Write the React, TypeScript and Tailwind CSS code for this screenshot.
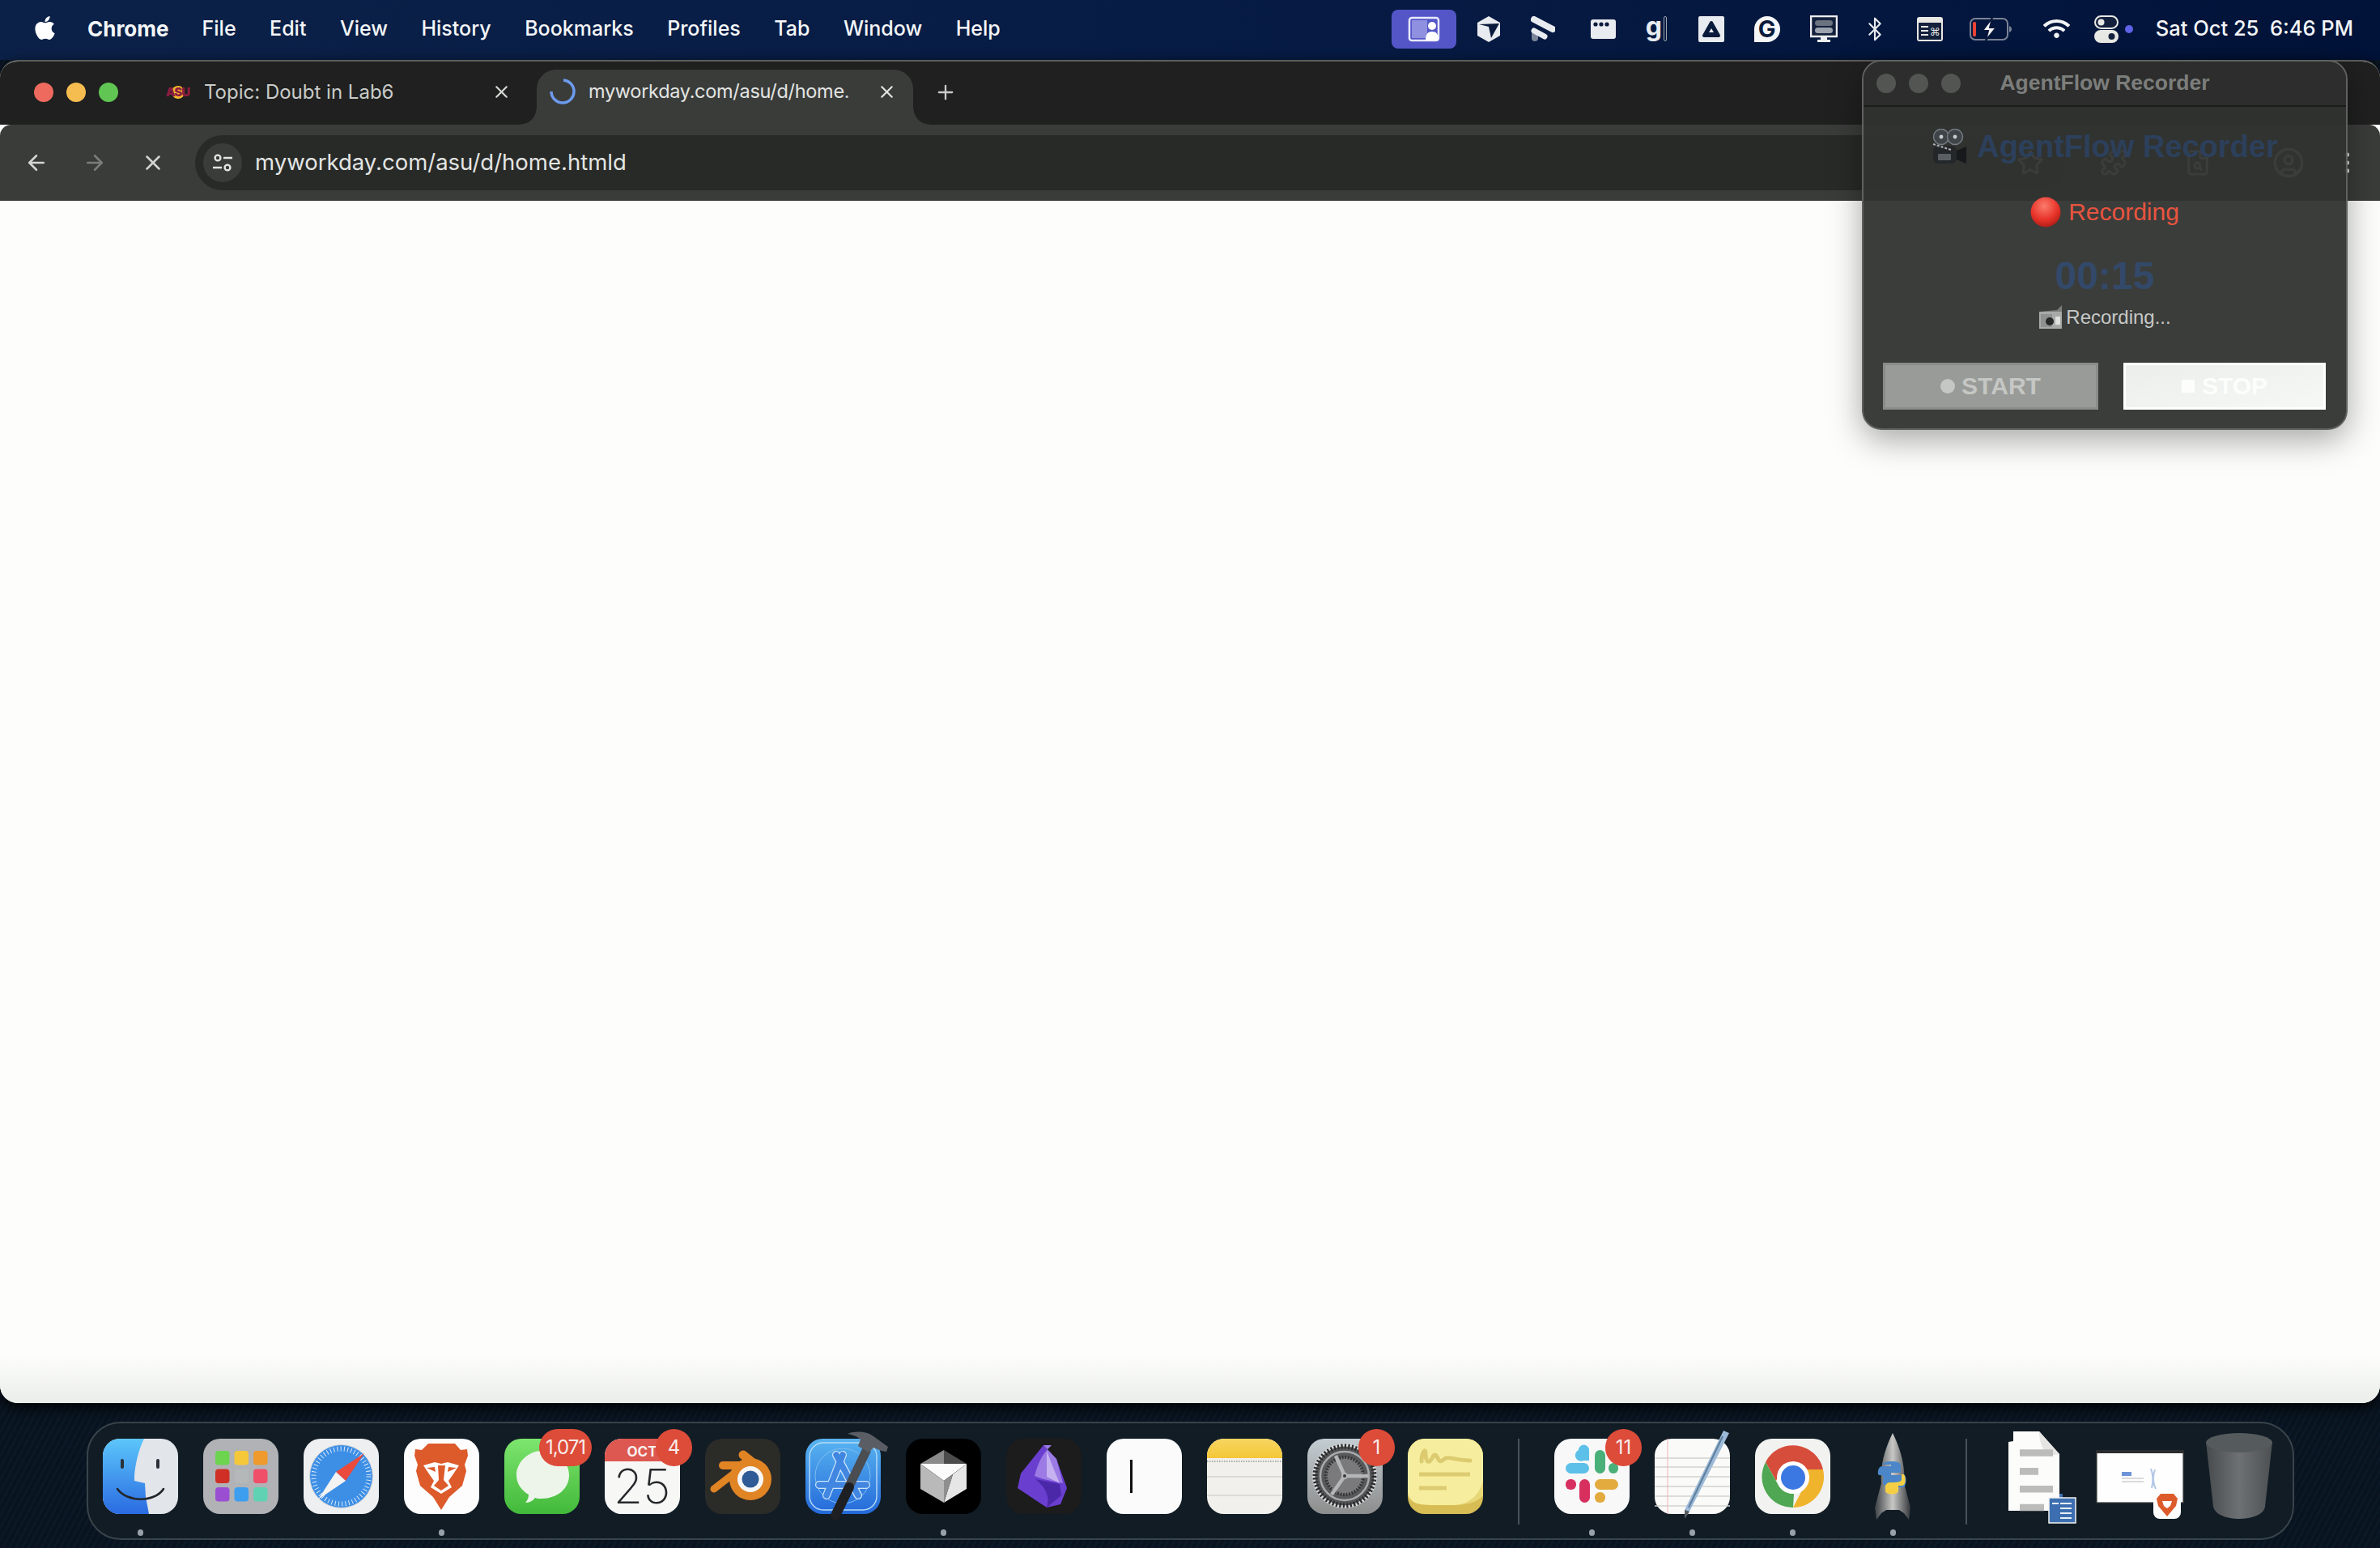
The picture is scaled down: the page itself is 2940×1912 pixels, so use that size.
import type { ReactNode } from "react";
import { FaApple, FaWifi } from "react-icons/fa";
import { ArrowLeft, ArrowRight, Bluetooth, EllipsisVertical, FileSearch, Plus, Puzzle, Star, UserCircle, X } from "lucide-react";

const menuItems = ["File", "Edit", "View", "History", "Bookmarks", "Profiles", "Tab", "Window", "Help"];

const ScreenPill = () => (
	<div className="flex h-[48px] w-[80px] items-center justify-center rounded-[8px] bg-[#5456c8]">
		<svg width="40" height="32" viewBox="0 0 40 32">
			<rect x="2" y="2" width="36" height="28" rx="3" fill="none" stroke="#e8e8fa" strokeWidth="2.5" />
			<rect x="5" y="5" width="19" height="22" fill="#8f90e0" />
			<circle cx="30" cy="12" r="5" fill="#fff" />
			<path d="M22 30c0-8 3-11 8-11s8 3 8 11z" fill="#fff" />
		</svg>
	</div>
);

const TopIcons = () => (
	<div className="flex items-center">
		<ScreenPill />
		<svg className="ml-[26px]" width="28" height="32" viewBox="0 0 28 32">
			<path d="M14 0 28 8v16l-14 8-14-8V8z" fill="#e8ebef" />
			<path d="M2 10 27 9 17 27 14 13z" fill="#0a1a3c" />
		</svg>
		<svg className="ml-[38px]" width="30" height="32" viewBox="0 0 30 32">
			<path d="M5 21v6" stroke="#7d8699" strokeWidth="8" strokeLinecap="round" />
			<path d="M4 4 27 16" stroke="#e8ebef" strokeWidth="8" strokeLinecap="round" />
			<path d="M4 18 17 25" stroke="#e8ebef" strokeWidth="7" strokeLinecap="round" />
		</svg>
		<svg className="ml-[44px]" width="31" height="24" viewBox="0 0 31 24">
			<rect width="31" height="24" rx="3" fill="#e8ebef" />
			<circle cx="6" cy="6" r="2.6" fill="#0a1a3c" />
			<circle cx="13" cy="6" r="2.6" fill="#0a1a3c" />
			<circle cx="20" cy="6" r="2.6" fill="#0a1a3c" />
		</svg>
		<div className="ml-[37px] flex w-[30px] items-center gap-[2px]">
			<span className="mb-[6px] font-['Inter',sans-serif] text-[32px] leading-none font-bold text-[#e8ebef]">g</span>
			<span className="h-[31px] w-[4px] shrink-0 rounded-full border border-[#a0a8b4]" />
		</div>
		<svg className="ml-[35px]" width="32" height="32" viewBox="0 0 32 32">
			<rect width="32" height="32" rx="2" fill="#e8ebef" />
			<path d="M16 8 25 24H7z" fill="#0a1a3c" stroke="#0a1a3c" strokeWidth="4" strokeLinejoin="round" />
			<path d="M16 15l3 5h-6z" fill="#e8ebef" />
		</svg>
		<div className="ml-[37px] flex h-[32px] w-[32px] items-center justify-center rounded-tl-full rounded-tr-full rounded-br-full bg-[#f5f6f7] font-['Inter',sans-serif] text-[29px] leading-none font-bold text-[#0a1a3c]">G</div>
		<svg className="ml-[37px]" width="34" height="34" viewBox="0 0 34 34">
			<path d="M1 1h32v25H1z" fill="#14213d" stroke="#eceef0" strokeWidth="2.5" />
			<rect x="6" y="6" width="22" height="7" rx="3.5" fill="#6b7280" />
			<rect x="6" y="15" width="22" height="7" rx="3.5" fill="#9ca3af" />
			<path d="M13 27h8v3h4v3H9v-3h4z" fill="#eceef0" />
		</svg>
		<Bluetooth className="ml-[30px] text-[#e7eaee]" size={32} strokeWidth={1.6} />
		<svg className="ml-[36px]" width="32" height="30" viewBox="0 0 32 30">
			<rect width="32" height="30" rx="3" fill="#e8e8e4" />
			<rect x="2" y="7" width="28" height="21" fill="#14213d" />
			<path d="M5 12h9M5 17h9M5 22h9" stroke="#e8e8e4" strokeWidth="2" />
			<text x="22" y="23" fontSize="13" fill="#e8e8e4" textAnchor="middle" fontFamily="DejaVu Sans">⌘</text>
		</svg>
		<svg className="ml-[33px]" width="52" height="28" viewBox="0 0 52 28">
			<rect x="1" y="1" width="46" height="26" rx="6" fill="none" stroke="#7b8494" strokeWidth="2" />
			<rect x="4" y="5" width="4" height="18" rx="1.5" fill="#ea4335" />
			<path d="M49 10c2 1 3 2 3 4s-1 3-3 4z" fill="#7b8494" />
			<path d="M28 0 16 16h7l-3 12 13-16h-8z" fill="#f5f6f7" stroke="#0a1a3c" strokeWidth="2" />
		</svg>
		<FaWifi className="ml-[39px] text-[#f1f3f5]" size={33} />
		<svg className="ml-[30px]" width="30" height="34" viewBox="0 0 30 34">
			<rect x="1" y="1" width="28" height="15" rx="7.5" fill="#14213d" stroke="#e8e8e4" strokeWidth="2" />
			<circle cx="8.5" cy="8.5" r="4" fill="#e8e8e4" />
			<rect y="18" width="30" height="16" rx="8" fill="#e8e8e4" />
			<circle cx="21.5" cy="26" r="4" fill="#14213d" />
		</svg>
		<span className="ml-[8px] h-[10px] w-[10px] rounded-full bg-[#5d62e6]" />
	</div>
);

const MenuBar = () => (
	<div className="flex h-[74px] shrink-0 items-center justify-between bg-gradient-to-r from-[#0b2148] via-[#071c45] to-[#021339] pr-[33px] pb-[3px] pl-[39px] font-['Inter',sans-serif] text-[25px] text-[#f4f6f8]">
		<div className="flex items-center">
			<FaApple className="mb-[2px] text-white" size={33} />
			<span className="ml-[36px] text-[26px] font-bold">Chrome</span>
			<div className="ml-[41px] flex gap-[41.5px] font-medium">
				{menuItems.map((item) => (
					<span key={item}>{item}</span>
				))}
			</div>
		</div>
		<div className="flex items-center">
			<TopIcons />
			<span className="ml-[28px] text-[25.5px] font-medium whitespace-pre">Sat Oct 25  6:46 PM</span>
		</div>
	</div>
);

const TabStrip = () => (
	<div className="flex h-[78px] shrink-0 items-end bg-[#1f201f] pl-[42px] font-['Inter',sans-serif] text-[24px]">
		<div className="flex h-[78px] items-center gap-[16px] pb-[3px]">
			<span className="h-[24px] w-[24px] rounded-full bg-[#ee6a5f]" />
			<span className="h-[24px] w-[24px] rounded-full bg-[#f5bd4f]" />
			<span className="h-[24px] w-[24px] rounded-full bg-[#61c554]" />
		</div>
		<div className="ml-[57px] flex h-[78px] w-[460px] items-center pb-[3px]">
			<span className="relative flex h-[26px] w-[33px] items-center justify-center">
				<span className="absolute h-[16px] w-[16px] rounded-full bg-[#f5b82e]" />
				<span className="relative text-[15px] leading-none font-black tracking-[-1px] text-[#8c1d40]">ASU</span>
			</span>
			<span className="ml-[16px] text-[#c9cbc9]">Topic: Doubt in Lab6</span>
			<X className="mr-[31px] ml-auto text-[#d8dad8]" size={25} strokeWidth={2} />
		</div>
		<div className="relative flex h-[68px] w-[465px] items-center rounded-t-[24px] bg-[#3a3c3a] pb-[14px]">
			<span className="absolute bottom-0 -left-[20px] h-[20px] w-[20px] bg-[radial-gradient(circle_at_0_0,transparent_19px,#3a3c3a_20px)]" />
			<span className="absolute -right-[20px] bottom-0 h-[20px] w-[20px] bg-[radial-gradient(circle_at_100%_0,transparent_19px,#3a3c3a_20px)]" />
			<svg className="ml-[15px] shrink-0" width="34" height="34" viewBox="0 0 34 34">
				<path d="M18 3a14 14 0 1 1-15 14" fill="none" stroke="#6c9bef" strokeWidth="3.5" />
			</svg>
			<span className="relative ml-[15px] w-[333px] text-[23.5px] tracking-[-0.3px] whitespace-nowrap text-[#e3e5e3]">
				myworkday.com/asu/d/home.
				<span className="absolute top-0 right-0 bottom-0 w-[16px] bg-gradient-to-l from-[#3a3c3a] to-transparent" />
			</span>
			<X className="ml-[23px] shrink-0 text-[#e3e5e3]" size={25} strokeWidth={2} />
		</div>
		<div className="flex h-[78px] items-center pb-[3px] pl-[26px]">
			<Plus className="text-[#c9cbc9]" size={28} strokeWidth={2} />
		</div>
	</div>
);

const Toolbar = () => (
	<div className="flex h-[94px] shrink-0 items-center rounded-t-[14px] bg-[#3a3c3a] pl-[30px] font-['Inter',sans-serif]">
		<ArrowLeft className="text-[#d3d5d3]" size={30} strokeWidth={2} />
		<ArrowRight className="ml-[42px] text-[#7b7d7b]" size={30} strokeWidth={2} />
		<X className="ml-[42px] text-[#d3d5d3]" size={30} strokeWidth={2} />
		<div className="ml-[37px] flex h-[68px] w-[2310px] items-center rounded-full bg-[#282a28] pl-[10px]">
			<div className="flex h-[48px] w-[48px] items-center justify-center rounded-full bg-[#3a3c3a]">
				<svg width="28" height="28" viewBox="0 0 28 28" fill="none" stroke="#e3e5e3" strokeWidth="2.4">
					<circle cx="8" cy="8" r="3.4" />
					<path d="M15 8h11M2 20h11" />
					<circle cx="20" cy="20" r="3.4" />
				</svg>
			</div>
			<span className="ml-[16px] text-[27.5px] text-[#e3e5e3]">myworkday.com/asu/d/home.htmld</span>
			<Star className="mr-[26px] ml-auto text-white" size={34} strokeWidth={2} />
		</div>
		<Puzzle className="ml-[43px] text-white" size={34} strokeWidth={2} />
		<FileSearch className="ml-[70px] text-white" size={34} strokeWidth={2} />
		<UserCircle className="ml-[75px] text-white" size={40} strokeWidth={2} />
		<EllipsisVertical className="ml-[35px] text-white" size={34} strokeWidth={2} />
	</div>
);

const ChromeWindow = () => (
	<div className="relative z-10 flex h-[1659px] shrink-0 flex-col overflow-hidden rounded-[22px] border-t-2 border-[#5c5e5c] bg-[#fdfefc] shadow-[0_6px_18px_rgba(0,0,0,0.9)]">
		<TabStrip />
		<Toolbar />
		<div className="flex-1 bg-gradient-to-b from-[#fdfefc] from-[96%] to-[#ebedeb]" />
	</div>
);

const MovieCamera = () => (
	<svg width="44" height="44" viewBox="0 0 44 44">
		<circle cx="12" cy="10" r="9.5" fill="#3f4449" stroke="#747a80" strokeWidth="1.5" />
		<circle cx="29" cy="10" r="9.5" fill="#3f4449" stroke="#747a80" strokeWidth="1.5" />
		<circle cx="12" cy="10" r="2.4" fill="#c8ccd0" />
		<circle cx="29" cy="10" r="2.4" fill="#c8ccd0" />
		<rect x="2" y="21" width="29" height="22" rx="6" fill="#24272a" />
		<rect x="8" y="31" width="16" height="8" rx="1" fill="#5a5f64" />
		<path d="M31 27l12-5v21l-12-5z" fill="#171a1c" />
		<path d="M2 19l22 7" stroke="#aeb2b6" strokeWidth="2" strokeDasharray="3 2" />
	</svg>
);

const RecordDot = () => (
	<svg width="38" height="38" viewBox="0 0 38 38">
		<defs>
			<radialGradient id="rec" cx="45%" cy="30%" r="75%">
				<stop offset="0" stopColor="#fb7b6b" />
				<stop offset=".6" stopColor="#e8342a" />
				<stop offset="1" stopColor="#a81a14" />
			</radialGradient>
		</defs>
		<circle cx="19" cy="19" r="18.5" fill="url(#rec)" />
	</svg>
);

const Camcorder = () => (
	<svg width="30" height="30" viewBox="0 0 30 30">
		<path d="M1 8h28v21H1z" fill="#a7aaa8" />
		<path d="M1 8l22-2 6-6v8z" fill="#7c7f7d" />
		<rect x="3" y="11" width="14" height="16" fill="#8e918f" />
		<circle cx="14" cy="20" r="5" fill="#26282a" />
		<rect x="21" y="14" width="6" height="10" fill="#dfe1df" />
	</svg>
);

const RecorderWindow = () => (
	<div className="absolute top-[74px] left-[2300px] z-20 flex h-[457px] w-[600px] flex-col overflow-hidden rounded-[24px] border-2 border-[#5f615f] bg-[rgba(48,51,48,0.95)] font-['Liberation_Sans',sans-serif] shadow-[0_12px_40px_rgba(0,0,0,0.35)]">
		<div className="relative flex h-[56px] shrink-0 items-center justify-center border-b-2 border-[#1a1b1a] bg-[#2c2d2c]">
			<div className="absolute left-[16px] flex gap-[16px]">
				<span className="h-[24px] w-[24px] rounded-full bg-[#525552]" />
				<span className="h-[24px] w-[24px] rounded-full bg-[#525552]" />
				<span className="h-[24px] w-[24px] rounded-full bg-[#525552]" />
			</div>
			<span className="text-[26.5px] font-bold text-[#7c7e7c]">AgentFlow Recorder</span>
		</div>
		<div className="mt-[24px] flex h-[50px] items-center justify-center gap-[12px]">
			<MovieCamera />
			<span className="text-[38px] leading-none font-bold text-[#2c405c]">AgentFlow Recorder</span>
		</div>
		<div className="mt-[36px] flex h-[40px] items-center justify-center gap-[9px]">
			<RecordDot />
			<span className="text-[30px] leading-none text-[#e8543f]">Recording</span>
		</div>
		<div className="mt-[35px] h-[48px] text-center text-[48px] leading-[48px] font-bold text-[#33496a]">00:15</div>
		<div className="mt-[12px] flex h-[30px] items-center justify-center gap-[4px] text-[24px] text-[#c6c9c6]">
			<Camcorder />
			<span>Recording...</span>
		</div>
		<div className="mt-[41px] flex items-stretch pr-[25px] pl-[24px]">
			<div className="flex h-[58px] w-[266px] items-center justify-center gap-[8px] border-[3px] border-[#8a8c89] bg-[#999b98] text-[30px] leading-none font-bold text-[#c5c7c4]">
				<span className="h-[18px] w-[18px] rounded-full bg-[#c5c7c4]" />
				START
			</div>
			<div className="ml-auto flex h-[58px] w-[250px] items-center justify-center gap-[9px] border-[3px] border-white bg-gradient-to-br from-[#eceeeb] to-[#f6f8f5] text-[30px] leading-none font-bold text-[#fdfefb]">
				<span className="h-[16px] w-[16px] bg-[#fdfefb]" />
				STOP
			</div>
		</div>
	</div>
);

const Ico = ({ children }: { children: ReactNode }) => (
	<svg className="overflow-visible" width="93" height="93" viewBox="0 0 93 93">
		{children}
	</svg>
);

const Finder = () => (
	<Ico>
		<defs>
			<linearGradient id="finderBlue" x1="0" y1="0" x2="0" y2="1">
				<stop offset="0" stopColor="#5cc6fa" />
				<stop offset="1" stopColor="#2a6be2" />
			</linearGradient>
		</defs>
		<rect width="93" height="93" rx="21" fill="#e2e5ea" />
		<path d="M21 0h30C44 14 40 32 39 46v6l13 3 1 17 4 21H21A21 21 0 0 1 0 72V21A21 21 0 0 1 21 0z" fill="url(#finderBlue)" />
		<path d="M24 27v8M68 27v8" stroke="#2a3038" strokeWidth="4" strokeLinecap="round" />
		<path d="M18 62c12 17 46 17 57 0" fill="none" stroke="#22262c" strokeWidth="2.6" strokeLinecap="round" />
	</Ico>
);

const Launchpad = () => {
	const colors = ["#6cd44f", "#f5c83a", "#ee9a2c", "#cf2f25", "#b4b8b8", "#ef4f68", "#9a4fd2", "#3d9ef0", "#5fd2b4"];
	return (
		<Ico>
			<rect width="93" height="93" rx="21" fill="#b0b2b5" />
			{colors.map((c, i) => (
				<rect key={c} x={15 + (i % 3) * 23.5} y={15 + Math.floor(i / 3) * 22.5} width="17.5" height="17.5" rx="4" fill={c} />
			))}
		</Ico>
	);
};

const Safari = () => (
	<Ico>
		<rect width="93" height="93" rx="21" fill="#eeeff0" />
		<circle cx="46.5" cy="46.5" r="39" fill="#3d8fe6" stroke="#d4d6d8" strokeWidth="1" />
		<circle cx="46.5" cy="46.5" r="34" fill="none" stroke="#dbe9f8" strokeWidth="6" strokeDasharray="1 3.3" />
		<path d="M75 18 40 41l12 11z" fill="#ea4b3c" />
		<path d="M18 75 40 41l12 11z" fill="#f3f3f3" />
	</Ico>
);

const Brave = () => (
	<Ico>
		<rect width="93" height="93" rx="21" fill="#fdfdfd" />
		<path d="M30 6h33l7 8 8-1 1 8-4 11 2 8-5 18-16 14-10 16-10-16-16-14-5-18 2-8-4-11 1-8 8 1z" fill="#dd5a2b" />
		<path d="M24 33l14-4 8 2 8-2 14 4-8 12-5 7 4 8-13 8-13-8 4-8-5-7z" fill="#fff" />
		<path d="M42 33h9l-2 18 6 7-9 6-9-6 6-7zM28 36l10-1 1 6zM65 36l-10-1-1 6z" fill="#dd5a2b" />
	</Ico>
);

const Messages = () => (
	<Ico>
		<defs>
			<linearGradient id="msg" x1="0" y1="0" x2="0" y2="1">
				<stop offset="0" stopColor="#7de56e" />
				<stop offset="1" stopColor="#42b93a" />
			</linearGradient>
		</defs>
		<rect width="93" height="93" rx="21" fill="url(#msg)" />
		<path d="M46 15c19 0 34 13 34 30S65 74 46 74c-3 0-6 0-8-1-3 4-7 6-12 6 3-3 4-7 4-10-9-5-15-14-15-24 0-17 16-30 31-30z" fill="#edf5ea" />
	</Ico>
);

const Calendar = () => (
	<Ico>
		<rect width="93" height="93" rx="21" fill="#f7f7f6" />
		<path d="M21 0h51a21 21 0 0 1 21 21v7H0v-7A21 21 0 0 1 21 0z" fill="#dc5850" />
		<text x="46" y="22" textAnchor="middle" fontSize="17" fontWeight="700" fill="#f7f0ee" fontFamily="Inter, sans-serif">OCT</text>
		<text x="46" y="80" textAnchor="middle" fontSize="59" fontWeight="200" fill="#26282a" fontFamily="Inter, sans-serif">25</text>
	</Ico>
);

const Blender = () => (
	<Ico>
		<rect width="93" height="93" rx="21" fill="#2b2b28" />
		<g stroke="#e08424" strokeLinecap="round" fill="none">
			<path d="M47 20 72 40" strokeWidth="11" />
			<path d="M22 33H52" strokeWidth="10" />
			<path d="M11 62 42 38" strokeWidth="9" />
		</g>
		<circle cx="56" cy="50" r="26" fill="#e08424" />
		<circle cx="56" cy="50" r="16" fill="#f6f6f6" />
		<circle cx="56" cy="50" r="10.5" fill="#2e5b95" />
	</Ico>
);

const Xcode = () => (
	<Ico>
		<defs>
			<linearGradient id="xc" x1="0" y1="0" x2="0" y2="1">
				<stop offset="0" stopColor="#58b4f0" />
				<stop offset="1" stopColor="#2469da" />
			</linearGradient>
		</defs>
		<rect width="93" height="93" rx="21" fill="url(#xc)" />
		<rect x="5" y="5" width="83" height="83" rx="17" fill="none" stroke="#b7dcf8" strokeWidth="1.4" />
		<circle cx="46" cy="46" r="34" fill="none" stroke="#7dbdf0" strokeWidth="1" />
		<g strokeLinecap="round" fill="none">
			<path d="M46 20 26 70M38 20 65 70M17 57H75" stroke="#cfe6fa" strokeWidth="10" />
			<path d="M46 20 26 70M38 20 65 70M17 57H75" stroke="#4186e0" strokeWidth="7.5" />
		</g>
		<path d="M76 13 38 92" stroke="#4a4d52" strokeWidth="11" />
		<path d="M54 60 37 95" stroke="#1d1f22" strokeWidth="12" strokeLinecap="round" />
		<path d="M52 -6C62 -10 76 -9 84 -3L102 10 100 16 94 15 84 11 78 17 65 9 68 1C64 -3 58 -5 52 -6z" fill="#5a5d63" />
	</Ico>
);

const Gem = () => (
	<Ico>
		<rect width="93" height="93" rx="21" fill="#000" />
		<path d="M47 14 18 31H47z" fill="#8a8a8a" />
		<path d="M47 14 75 31H47z" fill="#4c4c4c" />
		<path d="M18 31H75L47 52z" fill="#fbfbfb" />
		<path d="M18 31 47 52V79L18 62z" fill="#b9b9b9" />
		<path d="M75 31V62L47 79 58 44z" fill="#e6e6e6" />
		<path d="M47 52 58 44 47 79z" fill="#8f8f8f" />
	</Ico>
);

const Obsidian = () => (
	<Ico>
		<rect width="93" height="93" rx="21" fill="#1c1c1c" />
		<path d="M46 8 62 25l13 36-8 20-17 4-36-24 4-18z" fill="#6a3fd0" />
		<path d="M46 8 62 25l8 30-24-5-11-4c4-14 8-26 21-38z" fill="#9c7be4" />
		<path d="M50 15 58 36l8 19-16-8z" fill="#c6b2f0" />
		<path d="M36 50l30 6 2 14-18 15c4-12 0-24-14-35z" fill="#4b28a8" />
	</Ico>
);

const CursorTile = () => (
	<Ico>
		<rect width="93" height="93" rx="21" fill="#fbfbfb" />
		<rect x="29" y="26" width="3" height="41" fill="#111" />
	</Ico>
);

const Notes = () => (
	<Ico>
		<defs>
			<linearGradient id="notesTop" x1="0" y1="0" x2="0" y2="1">
				<stop offset="0" stopColor="#f7d562" />
				<stop offset="1" stopColor="#f4c736" />
			</linearGradient>
		</defs>
		<rect width="93" height="93" rx="21" fill="#f1f0ec" />
		<path d="M21 0h51a21 21 0 0 1 21 21v3H0v-3A21 21 0 0 1 21 0z" fill="url(#notesTop)" />
		<path d="M0 28h93" stroke="#a9a9a5" strokeWidth="2" strokeDasharray="1.5 1.5" />
		<path d="M0 47h93M0 70h93" stroke="#d5d4cf" strokeWidth="1.5" />
	</Ico>
);

const Settings = () => (
	<Ico>
		<defs>
			<linearGradient id="gearBg" x1="0" y1="0" x2="0" y2="1">
				<stop offset="0" stopColor="#c3cdd2" />
				<stop offset="1" stopColor="#8d8d8d" />
			</linearGradient>
		</defs>
		<rect width="93" height="93" rx="21" fill="url(#gearBg)" />
		<circle cx="46" cy="46" r="40" fill="#d9dadb" />
		<circle cx="46" cy="46" r="36.5" fill="#555658" stroke="#2c2c2e" strokeWidth="6" strokeDasharray="2.2 2.2" />
		<circle cx="46" cy="46" r="30" fill="#58595b" stroke="#a9aaac" strokeWidth="2.5" />
		<circle cx="46" cy="46" r="23" fill="#7a7a7c" stroke="#343436" strokeWidth="4" strokeDasharray="1.8 1.8" />
		<path d="M46 46 35 21M46 46H75M46 46 30 69" stroke="#b5b6b8" strokeWidth="4.5" />
		<circle cx="46" cy="46" r="3" fill="#3a3a3c" stroke="#b5b6b8" strokeWidth="2" />
	</Ico>
);

const Stickies = () => (
	<Ico>
		<rect width="93" height="93" rx="21" fill="#d8bd55" />
		<path d="M21 0h51a21 21 0 0 1 21 21v32c-4 16-17 29-36 29-20 0-40 1-48-3-6-3-9-8-9-14V21A21 21 0 0 1 21 0z" fill="#f6ee9e" />
		<path d="M93 53c-4 16-17 29-36 29 17 0 30-4 36-12z" fill="#e8d777" />
		<path d="M17 28c0-10 5-18 5-10 0 10 4 14 8 6s6-2 8 2 6 0 9-2c5-2 13 3 30 3" fill="none" stroke="#dccb70" strokeWidth="5" strokeLinecap="round" />
		<path d="M14 44h63" stroke="#dccb70" strokeWidth="5" />
		<path d="M14 61h34" stroke="#dccb70" strokeWidth="5" />
	</Ico>
);

const Slack = () => (
	<Ico>
		<rect width="93" height="93" rx="21" fill="#f8f8f8" />
		<rect x="14" y="30" width="29" height="13" rx="6.5" fill="#5cc0e8" />
		<path d="M30 14a6.5 6.5 0 0 1 13 0v13H36a6.5 6.5 0 0 1-6-13z" fill="#5cc0e8" />
		<rect x="50" y="14" width="13" height="29" rx="6.5" fill="#49b07a" />
		<rect x="67" y="30" width="12" height="13" rx="6" fill="#49b07a" />
		<rect x="14" y="50" width="13" height="13" rx="6" fill="#d7305f" />
		<rect x="31" y="50" width="13" height="29" rx="6.5" fill="#d7305f" />
		<rect x="50" y="50" width="29" height="13" rx="6.5" fill="#e3ab3e" />
		<rect x="50" y="66" width="13" height="13" rx="6" fill="#e3ab3e" />
	</Ico>
);

const TextEdit = () => (
	<Ico>
		<rect width="93" height="93" rx="21" fill="#fafaf8" />
		<path d="M0 24h93M0 35h93M0 47h93M0 59h93M0 71h93M0 83h93" stroke="#d2d2ce" strokeWidth="1.6" />
		<path d="M16 0v93" stroke="#eeb6b8" strokeWidth="1" />
		<path d="M85 -10 92 -7 43 90 37 98 37 88z" fill="#9dbbd8" />
		<path d="M84 -3 42 85" stroke="#5f7e9c" strokeWidth="2" />
		<path d="M37 88 43 90 37 99z" fill="#55595e" />
	</Ico>
);

const ChromeIcon = () => (
	<Ico>
		<rect width="93" height="93" rx="21" fill="#f2f2f0" />
		<path d="M13 29A38 38 0 0 1 84 38L47 38C38 38 30 40 26 52z" fill="#d64d3c" />
		<path d="M13 29 28 56c3 7 10 12 20 12L47 85A38 38 0 0 1 13 29z" fill="#4fa653" />
		<path d="M84 38A38 38 0 0 1 47 85L60 60c4-7 4-14-1-22z" fill="#efb42c" />
		<circle cx="47" cy="48" r="20" fill="#fff" />
		<circle cx="47" cy="48" r="15" fill="#3c78e2" />
	</Ico>
);

const PythonRocket = () => (
	<Ico>
		<defs>
			<linearGradient id="rocket" x1="0" y1="0" x2="1" y2="0">
				<stop offset="0" stopColor="#3d4144" />
				<stop offset=".5" stopColor="#c8c8c6" />
				<stop offset="1" stopColor="#34373a" />
			</linearGradient>
		</defs>
		<path d="M46 -7c10 20 16 42 14 62l8 30-2 15-6-8-6-4-16 0-6 4-6 8-2-15 8-30c-2-20 4-42 14-62z" fill="url(#rocket)" />
		<path d="M45 28c6 0 11 1 11 6v8H44v3h17c3 4 1 14-1 15H45c-6 0-11-2-11-6 0-3 1-6 0-8s-5 0-6-2c-1-6 2-10 5-10h11v-2H34c0-3 4-4 11-4z" fill="#4b86c8" />
		<path d="M60 44c3 6 2 14-3 14h-4v6c0 6-14 6-16 1v-7c2-5 6-4 11-4s8-1 9-3v-7z" fill="#f4cf45" />
	</Ico>
);

const DocStack = () => (
	<Ico>
		<path d="M14 -9h32l25 28v70H8V4l6-1z" fill="#fcfcfb" />
		<path d="M46 -9l25 28-13 2c-8-6-12-18-12-30z" fill="#e5e5e3" />
		<path d="M22 29h41M22 53h23M22 76h41M22 100h30" stroke="#bcbcba" strokeWidth="9" transform="translate(0 -10) scale(1 .95)" />
		<rect x="71" y="68" width="4" height="28" fill="#3d6fb0" />
		<rect x="58" y="73" width="33" height="31" fill="#3d6fb0" stroke="#f3f3f3" strokeWidth="1.5" />
		<path d="M62 80h8M72 80h14M72 86h14M72 92h14M72 98h14" stroke="#e7eef6" strokeWidth="2.2" />
	</Ico>
);

const ScreenshotThumb = () => (
	<Ico>
		<rect x="-7" y="15" width="107" height="64" fill="#fefefe" stroke="#3a3c3e" strokeWidth="1.2" />
		<rect x="-7" y="15" width="107" height="3" fill="#2a2c2e" />
		<rect x="24" y="41" width="12" height="5" fill="#6d93d8" />
		<path d="M24 49h27M24 53h27" stroke="#b6b6b6" strokeWidth="1" />
		<path d="M60 37c3 8 3 16 1 24M65 38c-3 8-3 16 1 24" fill="none" stroke="#b2c7e6" strokeWidth="2" />
		<rect x="63" y="66" width="34" height="33" rx="8" fill="#fcfcfc" />
		<path d="M72 68h16l5 6-2 9-11 13-11-13-2-9z" fill="#dd5a2b" />
		<path d="M74 77h12l-2 6 -4 3-4-3z" fill="#fff" />
	</Ico>
);

const Trash = () => (
	<Ico>
		<defs>
			<linearGradient id="trash" x1="0" y1="0" x2="1" y2="0">
				<stop offset="0" stopColor="#474b4d" />
				<stop offset=".5" stopColor="#6d7173" />
				<stop offset="1" stopColor="#4c5052" />
			</linearGradient>
		</defs>
		<path d="M4 4c8-12 74-12 82 0l-9 80c-3 20-60 20-64 0z" fill="url(#trash)" />
		<ellipse cx="45" cy="5" rx="41" ry="12" fill="#555a5c" />
	</Ico>
);

const Badge = ({ label, wide }: { label: string; wide?: boolean }) => (
	<span className={`absolute -top-[12px] -right-[15px] flex h-[46px] items-center justify-center rounded-full bg-[#dd4b39] font-['Inter',sans-serif] text-[24px] leading-none text-[#f8ecea] ${wide ? "w-[65px] text-[21px] tracking-[-1px]" : "w-[45px]"}`}>
		{label}
	</span>
);

const DockItem = ({ icon, badge, running }: { icon: ReactNode; badge?: string; running?: boolean }) => (
	<div className="flex w-[93px] shrink-0 flex-col items-center">
		<div className="relative h-[93px] w-[93px]">
			{icon}
			{badge && <Badge label={badge} wide={badge.length > 2} />}
		</div>
		{running && <span className="mt-[19px] h-[8px] w-[7px] rounded-full bg-[#98a1a8]" />}
	</div>
);

const Divider = () => <div className="mx-[12px] h-[106px] w-[2px] shrink-0 bg-[#4a5258]" />;

const Dock = () => (
	<div className="mt-[23px] ml-[107px] flex h-[146px] w-[2727px] shrink-0 items-start gap-[31px] rounded-[42px] border-2 border-[#39434a] bg-[#111c25] pt-[19px] pl-[18px]">
		<DockItem icon={<Finder />} running />
		<DockItem icon={<Launchpad />} />
		<DockItem icon={<Safari />} />
		<DockItem icon={<Brave />} running />
		<DockItem icon={<Messages />} badge="1,071" />
		<DockItem icon={<Calendar />} badge="4" />
		<DockItem icon={<Blender />} />
		<DockItem icon={<Xcode />} />
		<DockItem icon={<Gem />} running />
		<DockItem icon={<Obsidian />} />
		<DockItem icon={<CursorTile />} />
		<DockItem icon={<Notes />} />
		<DockItem icon={<Settings />} badge="1" />
		<DockItem icon={<Stickies />} />
		<Divider />
		<DockItem icon={<Slack />} badge="11" running />
		<DockItem icon={<TextEdit />} running />
		<DockItem icon={<ChromeIcon />} running />
		<DockItem icon={<PythonRocket />} running />
		<Divider />
		<DockItem icon={<DocStack />} />
		<DockItem icon={<ScreenshotThumb />} />
		<DockItem icon={<Trash />} />
	</div>
);

export default function App() {
	return (
		<div className="relative flex h-[1912px] w-[2940px] flex-col overflow-hidden bg-[repeating-linear-gradient(118deg,#091420_0px,#091420_3px,#0d1b29_4px,#081220_7px)]">
			<MenuBar />
			<ChromeWindow />
			<Dock />
			<RecorderWindow />
		</div>
	);
}
